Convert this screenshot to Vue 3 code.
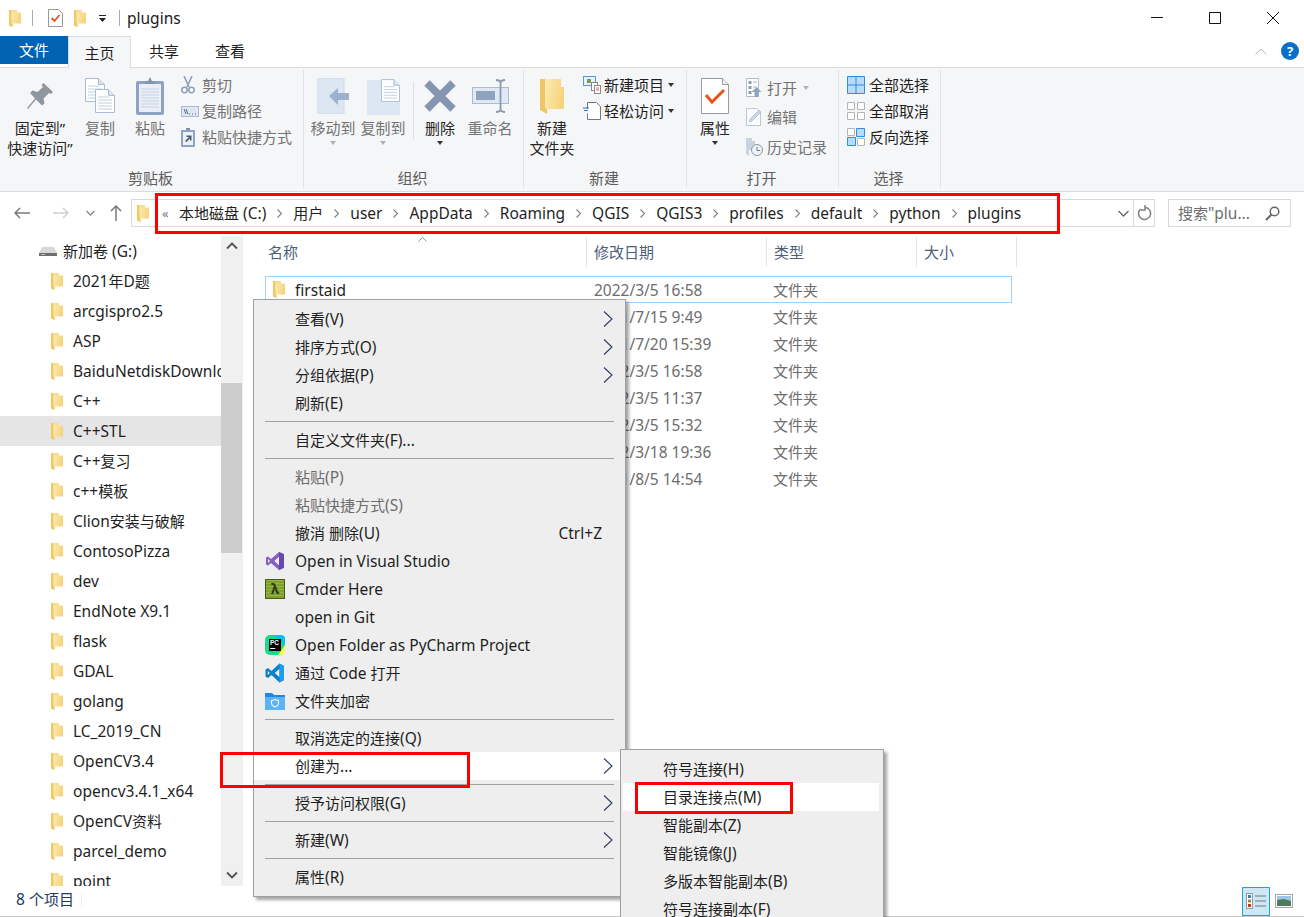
<script setup>
const sidebar = ['2021年D题','arcgispro2.5','ASP','BaiduNetdiskDownload','C++','C++STL','C++复习','c++模板','Clion安装与破解','ContosoPizza','dev','EndNote X9.1','flask','GDAL','golang','LC_2019_CN','OpenCV3.4','opencv3.4.1_x64','OpenCV资料','parcel_demo','point']
const crumbs = ['本地磁盘 (C:)','用户','user','AppData','Roaming','QGIS','QGIS3','profiles','default','python','plugins']
const files = [
  ['firstaid','2022/3/5 16:58'],['','2021/7/15 9:49'],['','2021/7/20 15:39'],['','2022/3/5 16:58'],
  ['','2022/3/5 11:37'],['','2022/3/5 15:32'],['','2022/3/18 19:36'],['','2021/8/5 14:54']
]
const menu = [
  {t:'查看(V)',arrow:1},{t:'排序方式(O)',arrow:1},{t:'分组依据(P)',arrow:1},{t:'刷新(E)'},{sep:1},
  {t:'自定义文件夹(F)...'},{sep:1},
  {t:'粘贴(P)',off:1},{t:'粘贴快捷方式(S)',off:1},{t:'撤消 删除(U)',key:'Ctrl+Z'},
  {t:'Open in Visual Studio',icon:'vs'},{t:'Cmder Here',icon:'cmder'},{t:'open in Git'},
  {t:'Open Folder as PyCharm Project',icon:'pc'},{t:'通过 Code 打开',icon:'code'},{t:'文件夹加密',icon:'lock'},{sep:1},
  {t:'取消选定的连接(Q)'},{t:'创建为...',arrow:1,hot:1},{sep:1},
  {t:'授予访问权限(G)',arrow:1},{sep:1},{t:'新建(W)',arrow:1},{sep:1},{t:'属性(R)'}
]
const sub = ['符号连接(H)','目录连接点(M)','智能副本(Z)','智能镜像(J)','多版本智能副本(B)','符号连接副本(F)']
const isLat = (s) => /^[\x00-\x7f]+$/.test(s)
const runs = (s) => s.match(/[\x00-\x7f]+|[^\x00-\x7f]+/g) || []
</script>

<template>
  <div class="win">
    <svg class="defs" width="0" height="0">
      <defs>
        <linearGradient id="fg" x1="0" x2="1" y1="0" y2="0.3">
          <stop offset="0" stop-color="#fdf2c0"/><stop offset="1" stop-color="#f6d47e"/>
        </linearGradient>
        <symbol id="folder" viewBox="0 0 12 17">
          <path d="M0 0h8v2.500h4V13.500H3.500V17L0 15.500z" fill="url(#fg)"/>
          <path d="M0 0h2.400v13.500H3.500V17L0 15.500z" fill="#f0c868"/>
          <path d="M2.400 0H8V2.500H2.400z" fill="#f8dd90"/>
        </symbol>
        <symbol id="doc" viewBox="0 0 20 24">
          <path d="M.5.5h13l6 6v17H.5z" fill="#fff" stroke="#a8bcd8"/>
          <path d="M13.5.5v6h6" fill="#dbe5f2" stroke="#a8bcd8"/>
          <path d="M3 8h11M3 11h14M3 14h14M3 17h14M3 20h14" stroke="#c3d0e2"/>
        </symbol>
      </defs>
    </svg>

    <header class="title">
      <svg class="i-folder-t"><use href="#folder"/></svg>
      <i class="bar b1"></i>
      <svg class="chk" width="15" height="18" viewBox="0 0 15 18">
        <path d="M.5.5h10l4 4v13H.5z" fill="#fff" stroke="#999"/>
        <path d="M3.5 9l3 3 5-6" fill="none" stroke="#e8531a" stroke-width="1.8"/>
      </svg>
      <svg class="i-folder-t f2"><use href="#folder"/></svg>
      <svg class="qa" width="7" height="7" viewBox="0 0 7 7"><path d="M0 0h7v1H0zM0 3h7L3.500 7z" fill="#222"/></svg>
      <i class="bar b2"></i>
      <span class="title-text lat">plugins</span>
      <div class="ctrls">
        <svg width="12" height="12" viewBox="0 0 12 12"><path d="M0 5.500h12" stroke="#111"/></svg>
        <svg width="12" height="12" viewBox="0 0 12 12"><path d="M.5.500h11v11H.5z" fill="none" stroke="#111"/></svg>
        <svg width="12" height="12" viewBox="0 0 12 12"><path d="M0 0l12 12M12 0L0 12" stroke="#111" stroke-width="1"/></svg>
      </div>
    </header>

    <nav class="tabs">
      <div class="tab file">文件</div>
      <div class="tab home">主页</div>
      <div class="tab">共享</div>
      <div class="tab">查看</div>
      <div class="tab-end">
        <svg width="12" height="7" viewBox="0 0 12 7"><path d="M.5 6.500L6 1l5.500 5.500" fill="none" stroke="#b5b5b5"/></svg>
        <span class="help">?</span>
      </div>
    </nav>

    <section class="ribbon">
      <div class="grp g1">
        <div class="grp-body">
          <div class="big w72">
            <div class="big-ic">
              <svg width="26" height="26" viewBox="0 0 26 26"><path d="M16.500 0L26 9l-2 2-2-1-5.500 5.500 1 5-2.500 2-6-6L1 26 0 25l8-9.500L3 10l2.500-2.500 5 1.500L16 4l-1.500-2z" fill="#8e979d"/></svg>
            </div>
            <span class="lb">固定到”<br>快速访问”</span>
          </div>
          <div class="big w48 off">
            <div class="big-ic">
              <svg width="30" height="36" viewBox="0 0 30 36"><use href="#doc" x="0" y="0" width="20" height="24"/><use href="#doc" x="10" y="10" width="20" height="26"/></svg>
            </div>
            <span class="lb">复制</span>
          </div>
          <div class="big w52 off">
            <div class="big-ic">
              <svg width="28" height="38" viewBox="0 0 28 38">
                <rect x="0" y="4" width="28" height="34" rx="2" fill="#8ea3c3"/>
                <rect x="3" y="7" width="22" height="28" fill="#eaeef6"/>
                <path d="M5 12h18M5 15h18M5 18h18M5 21h18M5 24h18M5 27h18M5 30h18" stroke="#c9d3e4"/>
                <path d="M9 7V4h3l2-4 2 4h3v3z" fill="#8495b2"/>
              </svg>
            </div>
            <span class="lb">粘贴</span>
          </div>
          <div class="col m4 off">
            <div class="sm">
              <span class="sm-ic">
                <svg width="14" height="18" viewBox="0 0 14 18"><path d="M3 0l5 11M11 0L6 11" stroke="#8ea0bb" stroke-width="1.600"/><circle cx="3.500" cy="14" r="2.700" fill="none" stroke="#8ea0bb" stroke-width="1.500"/><circle cx="10.500" cy="14" r="2.700" fill="none" stroke="#8ea0bb" stroke-width="1.500"/></svg>
              </span>剪切
            </div>
            <div class="sm">
              <span class="sm-ic">
                <svg width="18" height="11" viewBox="0 0 18 11"><rect x=".5" y=".5" width="17" height="10" fill="#dfe7f3" stroke="#a8b9d2"/><path d="M3 3l2 5M5 3l2 5M8 8h1M11 8h1M14 8h1" stroke="#5c6b82"/></svg>
              </span>复制路径
            </div>
            <div class="sm">
              <span class="sm-ic">
                <svg width="14" height="19" viewBox="0 0 14 19"><rect y="2" width="14" height="17" rx="1" fill="#8ea3c3"/><rect x="2" y="4" width="10" height="13" fill="#edf1f7"/><path d="M5 2V0h4v2z" fill="#7e8fac"/><path d="M4 13l4-4H5.500V7.500H10.500V12.500H9V10.500l-3.500 3.500z" fill="#4d5c75"/></svg>
              </span>粘贴快捷方式
            </div>
          </div>
        </div>
        <div class="grp-lb">剪贴板</div>
      </div>

      <div class="grp g2">
        <div class="grp-body">
          <div class="big w50 off">
            <div class="big-ic">
              <svg width="32" height="36" viewBox="0 0 32 36"><rect width="27" height="36" fill="#dde6f3" stroke="#cfdaea"/><path d="M12 18l9-8v5h11v7H21v5z" fill="#9db0cd"/></svg>
            </div>
            <span class="lb">移动到</span>
            <i class="tri grey"></i>
          </div>
          <div class="big w50 off">
            <div class="big-ic">
              <svg width="33" height="38" viewBox="0 0 33 38"><path d="M0 3h17v8h16v27H0z" fill="#dde6f3"/><use href="#doc" x="14" y="0" width="19" height="27"/></svg>
            </div>
            <span class="lb">复制到</span>
            <i class="tri grey"></i>
          </div>
          <i class="vline"></i>
          <div class="big w40">
            <div class="big-ic">
              <svg width="32" height="32" viewBox="0 0 32 32"><path d="M3 3l26 26M29 3L3 29" stroke="#8494b1" stroke-width="7.500"/></svg>
            </div>
            <span class="lb">删除</span>
            <i class="tri"></i>
          </div>
          <div class="big w60 off">
            <div class="big-ic">
              <svg width="37" height="34" viewBox="0 0 37 34"><rect x=".5" y="8.500" width="36" height="16" fill="#dfe8f4" stroke="#a9bbd5"/><rect x="4" y="12" width="19" height="9" fill="#8fa2c0"/><path d="M24 1c3 0 4 1 4.500 2C29 2 30 1 33 1M24 33c3 0 4-1 4.500-2 .5 1 1.500 2 4.500 2M28.500 3v28" fill="none" stroke="#8c99ad" stroke-width="1.800"/></svg>
            </div>
            <span class="lb">重命名</span>
          </div>
        </div>
        <div class="grp-lb">组织</div>
      </div>

      <div class="grp g3">
        <div class="grp-body">
          <div class="big w48">
            <div class="big-ic">
              <svg width="24" height="36" viewBox="0 0 24 36">
                <path d="M0 1h21v8h3v22H7v5L0 32z" fill="url(#fg)"/>
                <path d="M0 1h5v30h2v5l-7-4z" fill="#efc566"/>
              </svg>
            </div>
            <span class="lb">新建<br>文件夹</span>
          </div>
          <div class="col m6">
            <div class="sm">
              <span class="sm-ic">
                <svg width="18" height="18" viewBox="0 0 18 18"><rect x=".5" y=".5" width="12" height="9" fill="#e7f1fb" stroke="#5a9ac9"/><rect x="4" y="3" width="4" height="4" fill="#7f9a4e"/><rect x="8.500" y="6.500" width="6" height="8" fill="#fff" stroke="#888"/><rect x="11.500" y="9.500" width="6" height="8" fill="#fff" stroke="#888"/><path d="M13 12h3M13 14h3" stroke="#c66"/></svg>
              </span>新建项目<i class="tri inl"></i>
            </div>
            <div class="sm">
              <span class="sm-ic">
                <svg width="18" height="18" viewBox="0 0 18 18"><path d="M4.500.5h9l4 4v13h-13v-6M4.500 7V.5" fill="#fff" stroke="#777"/><path d="M0 6h6M1 8.500h4" stroke="#2b79c2" stroke-width="1.200"/></svg>
              </span>轻松访问<i class="tri inl"></i>
            </div>
          </div>
        </div>
        <div class="grp-lb">新建</div>
      </div>

      <div class="grp g4">
        <div class="grp-body">
          <div class="big w48">
            <div class="big-ic">
              <svg width="28" height="36" viewBox="0 0 28 36"><path d="M.5.5h21l6 6v29H.5z" fill="#fff" stroke="#9a9a9a"/><path d="M21.500.5v6h6" fill="#eee" stroke="#9a9a9a"/><path d="M5 17l6 7L23 12" fill="none" stroke="#e9541c" stroke-width="3"/></svg>
            </div>
            <span class="lb">属性</span>
            <i class="tri"></i>
          </div>
          <div class="col m6 tall off">
            <div class="sm">
              <span class="sm-ic">
                <svg width="16" height="19" viewBox="0 0 16 19"><path d="M.5.500h12v18H.5z" fill="#fff" stroke="#b2bdcb"/><path d="M2.500 3h3v3h-3zM2.500 8h3v3h-3zM2.500 13h3v3h-3z" fill="#8d9bb0"/><path d="M7 4h4M7 9h4" stroke="#aab6c8"/><path d="M10.500 9l5 5h-3v5h-4v-5h-3z" fill="#8ea3bf"/></svg>
              </span>打开<i class="tri inl grey"></i>
            </div>
            <div class="sm">
              <span class="sm-ic">
                <svg width="16" height="18" viewBox="0 0 16 18"><path d="M.5.500h10l4 4v13H.5z" fill="#fbfcfe" stroke="#bcc8d8"/><path d="M3 14l1-3L13 2l2 2-9 9z" fill="#c9d6e6" stroke="#9fb0c6" stroke-width=".6"/></svg>
              </span>编辑
            </div>
            <div class="sm">
              <span class="sm-ic">
                <svg width="17" height="19" viewBox="0 0 17 19"><path d="M0 1h6v3h3v9H3v6l-3-2z" fill="#c9d3e0"/><circle cx="11" cy="13" r="5.500" fill="#eef2f6" stroke="#8d98a6"/><path d="M11 10v3.500h3" fill="none" stroke="#6f7a88"/></svg>
              </span>历史记录
            </div>
          </div>
        </div>
        <div class="grp-lb">打开</div>
      </div>

      <div class="grp g5">
        <div class="grp-body">
          <div class="col m4">
            <div class="sm">
              <span class="sm-ic">
                <svg width="18" height="18" viewBox="0 0 18 18"><path d="M.5.500h17v17H.5zM9 .5v17M.5 9h17" fill="#b8dcf8" stroke="#2f8fdc"/></svg>
              </span>全部选择
            </div>
            <div class="sm">
              <span class="sm-ic">
                <svg width="18" height="18" viewBox="0 0 18 18"><path d="M.5.500h7v7h-7zM10.500.5h7v7h-7zM.5 10.500h7v7h-7zM10.500 10.500h7v7h-7z" fill="#fff" stroke="#b5b5b5"/></svg>
              </span>全部取消
            </div>
            <div class="sm">
              <span class="sm-ic">
                <svg width="18" height="18" viewBox="0 0 18 18"><path d="M.5.500h7v7h-7zM10.500 10.500h7v7h-7z" fill="#fff" stroke="#b5b5b5"/><path d="M9.500.5h8v8h-8zM.5 9.500h8v8h-8z" fill="#b8dcf8" stroke="#2f8fdc"/></svg>
              </span>反向选择
            </div>
          </div>
        </div>
        <div class="grp-lb">选择</div>
      </div>
    </section>

    <div class="addr-row">
      <svg class="nav n1" width="16" height="12" viewBox="0 0 16 12"><path d="M16 6H1M6 1L1 6l5 5" fill="none" stroke="#7a7a7a" stroke-width="1.500"/></svg>
      <svg class="nav n2" width="16" height="12" viewBox="0 0 16 12"><path d="M0 6h15M10 1l5 5-5 5" fill="none" stroke="#d0d0d0" stroke-width="1.500"/></svg>
      <svg class="nav n3" width="9" height="6" viewBox="0 0 9 6"><path d="M.5 1l4 4 4-4" fill="none" stroke="#8a8a8a" stroke-width="1.300"/></svg>
      <svg class="nav n4" width="12" height="16" viewBox="0 0 12 16"><path d="M6 16V1M1 6l5-5 5 5" fill="none" stroke="#7a7a7a" stroke-width="1.500"/></svg>
      <div class="addr">
        <svg class="addr-f"><use href="#folder"/></svg>
        <span class="dbl">«</span>
        <div class="crumbs">
          <template v-for="(c,i) in crumbs" :key="c">
            <svg v-if="i" class="sep" width="5" height="9" viewBox="0 0 5 9"><path d="M.5.500l4 4-4 4" fill="none" stroke="#808080" stroke-width="1.100"/></svg>
            <span><span v-for="(r,j) in runs(c)" :key="j" :class="{lat:isLat(r)}">{{ r }}</span></span>
          </template>
        </div>
        <svg class="dd" width="11" height="7" viewBox="0 0 11 7"><path d="M.5 1l5 5 5-5" fill="none" stroke="#666" stroke-width="1.300"/></svg>
        <i class="addr-v"></i>
        <svg class="ref" width="15" height="16" viewBox="0 0 15 16"><path d="M8.500 2.500a6 6 0 1 1-5 1.500M8 0v5H3.500" fill="none" stroke="#808080" stroke-width="1.500"/></svg>
      </div>
      <div class="search">
        <span>搜索<span class="lat">"plu...</span></span>
        <svg width="15" height="15" viewBox="0 0 15 15"><circle cx="9.500" cy="5.500" r="4.300" fill="none" stroke="#666" stroke-width="1.500"/><path d="M6.500 8.500L1 14" stroke="#666" stroke-width="2"/></svg>
      </div>
    </div>

    <main class="main">
      <aside class="side">
        <div class="tree">
          <div class="row vol">
            <svg width="18" height="11" viewBox="0 0 18 11"><path d="M3 1h12l3 6v3H0V7z" fill="#d8d8d8"/><path d="M0 7h18v3H0z" fill="#6f6f6f"/><path d="M2 8.500h4" stroke="#bbb"/></svg>
            <span>新加卷<span class="lat"> (G:)</span></span>
          </div>
          <div v-for="s in sidebar" :key="s" class="row" :class="{on: s==='C++STL'}">
            <svg class="fi"><use href="#folder"/></svg>
            <span><span v-for="(r,j) in runs(s)" :key="j" :class="{lat:isLat(r)}">{{ r }}</span></span>
          </div>
        </div>
        <div class="scroll">
          <svg width="12" height="8" viewBox="0 0 12 8"><path d="M1 6.500l5-5 5 5" fill="none" stroke="#505050" stroke-width="1.800"/></svg>
          <i class="thumb"></i>
          <svg class="dn" width="12" height="8" viewBox="0 0 12 8"><path d="M1 1.500l5 5 5-5" fill="none" stroke="#505050" stroke-width="1.800"/></svg>
        </div>
      </aside>
      <div class="list">
        <div class="heads">
          <div>名称<svg class="sort" width="9" height="5" viewBox="0 0 9 5"><path d="M.5 4.500l4-4 4 4" fill="none" stroke="#9a9a9a"/></svg></div>
          <div>修改日期</div>
          <div>类型</div>
          <div>大小</div>
        </div>
        <div v-for="(f,i) in files" :key="i" class="file-row" :class="{first:i===0}">
          <div class="fname"><svg v-if="f[0]" class="fi2"><use href="#folder"/></svg><span class="lat">{{ f[0] }}</span></div>
          <div class="muted lat">{{ f[1] }}</div>
          <div class="muted">文件夹</div>
        </div>
      </div>
    </main>

    <footer class="status">
      <span class="count"><span class="lat">8 </span>个项目</span>
      <i class="st-v"></i>
      <div class="views">
        <div class="v-on">
          <svg width="20" height="16" viewBox="0 0 20 16"><rect x=".5" y=".5" width="6" height="15" fill="#fff" stroke="#999"/><path d="M2 2h3v3H2z" fill="#3b7fa8"/><path d="M2 6.500h3v3H2z" fill="#a78a3a"/><path d="M2 11h3v3H2z" fill="#c4391d"/><path d="M9 3h11M9 8h11M9 13h11" stroke="#777"/></svg>
        </div>
        <svg width="18" height="14" viewBox="0 0 18 14"><rect x=".5" y=".5" width="17" height="13" fill="#fff" stroke="#a5a5a5"/><path d="M2 2h14v5H2z" fill="#9bc6e6"/><path d="M2 6l7-1 7 2v5H2z" fill="#4f7a5c"/></svg>
      </div>
    </footer>

    <div class="menu">
      <template v-for="(m,i) in menu" :key="i">
        <div v-if="m.sep" class="m-sep"></div>
        <div v-else class="m-item" :class="{off:m.off,hot:m.hot}">
          <span class="m-ic">
            <svg v-if="m.icon==='vs'" width="20" height="20" viewBox="0 0 20 20"><path fill-rule="evenodd" d="M14 1l5 2.200v13.600L14 19 6 12l-3 2.500-2-1V6.500l2-1L6 8zM14 6l-4.500 4 4.500 4zM3 8v4l2-2z" fill="#8661c5"/><path d="M14 1l5 2.200v13.600L14 19z" fill="#6b45b0"/><path d="M14 6l-4.500 4 4.500 4z" fill="#eee"/></svg>
            <span v-else-if="m.icon==='cmder'" class="cm">λ</span>
            <svg v-else-if="m.icon==='pc'" width="20" height="20" viewBox="0 0 20 20"><rect width="20" height="20" rx="5" fill="#21d789"/><path d="M8 0h8a4 4 0 0 1 4 4v6z" fill="#07c3f2"/><path d="M13 20h3a4 4 0 0 0 4-4v-6z" fill="#fcf84a"/><rect x="4" y="4" width="12" height="12" fill="#000"/><text x="5" y="10" class="pc-t">PC</text><path d="M5.200 13.500h5" stroke="#fff"/></svg>
            <svg v-else-if="m.icon==='code'" width="20" height="20" viewBox="0 0 20 20"><path fill-rule="evenodd" d="M14.500 0.500L19 3v14l-4.500 2.500L6.500 12 3 15l-2.500-1.500v-7L3 5l3.500 3zM14.500 5.800L9.800 10l4.700 4.200zM2.800 8v4l2-2z" fill="#0a7fd0"/><path d="M14.500 .5L19 3v14l-4.500 2.500z" fill="#1f9cf0"/></svg>
            <svg v-else-if="m.icon==='lock'" width="20" height="20" viewBox="0 0 20 20"><path d="M0 2h7l2 2h11v14a1 1 0 0 1-1 1H1a1 1 0 0 1-1-1z" fill="#1e88e5"/><path d="M0 6h20v12a1 1 0 0 1-1 1H1a1 1 0 0 1-1-1z" fill="#5cb3f5"/><path d="M10 8.500l3.500 1.200v2.600c0 1.800-1.400 2.900-3.500 3.700-2.100-.8-3.500-1.900-3.500-3.700V9.700z" fill="none" stroke="#e8f4fe" stroke-width="1.100"/></svg>
          </span>
          <span class="m-t"><span v-for="(r,j) in runs(m.t)" :key="j" :class="{lat:isLat(r)}">{{ r }}</span></span>
          <span v-if="m.key" class="m-key lat">{{ m.key }}</span>
          <svg v-if="m.arrow" class="m-arr" width="10" height="16" viewBox="0 0 10 16"><path d="M1 .5l8 7.500-8 7.500" fill="none" stroke="#2c3a5e" stroke-width="1.100"/></svg>
        </div>
      </template>
    </div>

    <div class="submenu">
      <div v-for="(s,i) in sub" :key="s" class="s-item" :class="{hot:i===1}"><span v-for="(r,j) in runs(s)" :key="j" :class="{lat:isLat(r)}">{{ r }}</span></div>
    </div>

    <i class="mark mk1"></i>
    <i class="mark mk2"></i>
    <i class="mark mk3"></i>
  </div>
</template>

<style>
html, body { margin: 0; padding: 0; background: #fff; overflow: hidden; }
</style>

<style scoped>
.win {
  position: relative; width: 1304px; height: 917px; overflow: hidden; background: #fff;
  display: flex; flex-direction: column; color: #1f1f1f;
  font-family: "Noto Sans", "Noto Sans CJK SC", sans-serif; font-size: 15px; line-height: 20px;
}
.lat { font-size: 15.5px; }
.defs { position: absolute; }
i { display: block; font-style: normal; }

.title { height: 36px; flex: none; display: flex; align-items: center; }
.i-folder-t { width: 12px; height: 17px; margin-left: 9px; }
.bar { width: 1px; height: 16px; background: #a9a9a9; }
.b1 { margin-left: 11px; }
.chk { margin-left: 15px; }
.f2 { margin-left: 11px; }
.qa { margin-left: 13px; }
.b2 { margin-left: 13px; }
.title-text { margin-left: 7px; color: #1a1a1a; }
.ctrls { margin-left: auto; margin-right: 25px; display: flex; gap: 46px; }

.tabs { height: 32px; flex: none; display: flex; position: relative; z-index: 1; }
.tab { width: 66px; display: flex; align-items: center; justify-content: center; padding-bottom: 2px; }
.tab.file { width: 68px; height: 28px; background: #0063b1; color: #fff; padding: 0; }
.tab.home { width: 63px; height: 32px; box-sizing: border-box; background: #f5f6f7; border: 1px solid #dadbdc; border-bottom: 0; padding-bottom: 0; margin-left: 0; }
.tab-end { margin-left: auto; margin-right: 5px; display: flex; align-items: center; gap: 14px; padding-bottom: 2px; }
.help { width: 18px; height: 18px; border-radius: 50%; background: #0a6fc9; color: #fff; font-size: 13px; font-weight: 700; line-height: 18px; text-align: center; }

.ribbon { height: 125px; flex: none; box-sizing: border-box; display: flex; background: #f5f6f7; border-top: 1px solid #dadbdc; border-bottom: 1px solid #dadbdc; margin-top: -1px; }
.grp { box-sizing: border-box; flex: none; display: flex; flex-direction: column; position: relative; }
.grp::after { content: ""; position: absolute; right: 0; top: 2px; bottom: 3px; width: 1px; background: #e1e3e6; }
.g1 { width: 304px; }
.g2 { width: 220px; }
.g3 { width: 163px; }
.g4 { width: 152px; }
.g5 { width: 102px; }
.g5 .sm-ic { padding-left: 0; }
.grp-body { flex: 1; display: flex; padding: 6px 0 0 4px; min-height: 0; }
.grp-lb { height: 24px; margin-bottom: 1px; padding-right: 3px; text-align: center; color: #5c5c5c; font-size: 15px; line-height: 24px; }
.big { display: flex; flex-direction: column; align-items: center; flex: none; position: relative; color: #262626; }
.big.off, .col.off { color: #737373; }
.big-ic { height: 44px; display: flex; align-items: center; justify-content: center; }
.lb { text-align: center; white-space: nowrap; line-height: 20px; }
.w72 { width: 72px; } .w48 { width: 48px; } .w52 { width: 52px; } .w50 { width: 50px; } .w40 { width: 40px; } .w60 { width: 60px; }
.vline { width: 1px; height: 57px; background: #dcdee1; margin: 8px 6px 0 5px; flex: none; }
.tri { width: 0; height: 0; border: 3.500px solid transparent; border-top: 4px solid #333; border-bottom: 0; margin-top: 3px; }
.tri.grey { border-top-color: #b0b0b0; }
.tri.inl { margin: 0 0 0 4px; }
.col { flex: none; margin-top: -2px; }
.m4 { margin-left: 4px; }
.m6 { margin-left: 6px; }
.sm { height: 26px; display: flex; align-items: center; white-space: nowrap; }
.sm-ic { width: 22px; flex: none; display: flex; align-items: center; padding-left: 1px; box-sizing: border-box; }
.tall { margin-top: -1px; }
.tall .sm { height: 29.500px; }
.tall .tri.inl { margin-left: 6px; }

.addr-row { height: 38px; flex: none; display: flex; padding-top: 7px; box-sizing: border-box; align-items: flex-start; }
.nav { flex: none; margin-top: 8px; }
.n1 { margin-left: 14px; }
.n2 { margin-left: 23px; }
.n3 { margin-left: 17px; margin-top: 11px; }
.n4 { margin-left: 15px; margin-top: 6px; }
.addr { width: 1024px; height: 28px; box-sizing: border-box; margin-left: 9px; border: 1px solid #d9d9d9; display: flex; align-items: center; flex: none; }
.addr-f { width: 12px; height: 17px; margin-left: 5px; flex: none; }
.dbl { margin-left: 13px; color: #777; font-size: 13px; width: 17px; flex: none; }
.crumbs { display: flex; align-items: center; gap: 11px; flex: 1; white-space: nowrap; overflow: hidden; }
.dd { margin-right: 4px; flex: none; }
.addr-v { width: 1px; height: 26px; background: #d9d9d9; flex: none; }
.ref { margin: 0 2px 0 3px; flex: none; }
.search { width: 123px; height: 28px; box-sizing: border-box; margin-left: 13px; border: 1px solid #d9d9d9; display: flex; align-items: center; justify-content: space-between; padding: 0 10px 0 9px; color: #6d6d6d; flex: none; }

.main { flex: 1; min-height: 0; display: flex; overflow: hidden; }
.side { width: 243px; flex: none; display: flex; position: relative; border-right: 1px solid #f0f0f0; box-sizing: border-box; }
.tree { width: 221px; flex: none; padding-top: 6px; overflow: hidden; box-sizing: border-box; }
.row { height: 30px; display: flex; align-items: center; padding-left: 51px; white-space: nowrap; color: #1f1f1f; }
.row.on { background: #e5e5e5; }
.row.vol { padding-left: 39px; }
.row.vol span { margin-left: 6px; }
.row.vol span span { margin-left: 0; }
.fi { width: 12px; height: 17px; margin-right: 10px; flex: none; }
.scroll { width: 21px; flex: none; background: #f0f0f0; margin-top: 6px; display: flex; flex-direction: column; align-items: center; position: relative; padding-top: 6px; box-sizing: border-box; }
.thumb { position: absolute; left: 0; right: 0; top: 147px; height: 170px; background: #cdcdcd; }
.dn { margin-top: auto; margin-bottom: 7px; }

.list { flex: 1; min-width: 0; padding: 7px 0 0 18px; }
.heads { display: grid; grid-template-columns: 326px 180px 150px 100px; height: 30px; width: 756px; margin-bottom: 9px; color: #4c607a; position: relative; }
.heads > div { border-right: 1px solid #e5e5e5; padding-left: 7px; line-height: 30px; }
.sort { position: absolute; left: 157px; top: 0; }
.file-row { display: grid; grid-template-columns: 328px 179px 150px; width: 747px; height: 27px; box-sizing: border-box; margin-left: 4px; align-items: center; border: 1px solid transparent; }
.file-row.first { border-color: #99d1ff; }
.fname { display: flex; align-items: center; padding-left: 7px; }
.fi2 { width: 12px; height: 17px; margin-right: 10px; flex: none; }
.muted { color: #6d6d6d; }

.status { height: 31px; flex: none; box-sizing: border-box; border-bottom: 1px solid #c8c8c8; display: flex; align-items: center; position: relative; }
.count { margin-left: 16px; color: #1e395b; padding-bottom: 4px; }
.st-v { width: 1px; height: 14px; background: #f0f0f0; margin-left: 7px; margin-bottom: 2px; }
.views { margin-left: auto; margin-right: 11px; display: flex; align-items: center; gap: 5px; }
.v-on { width: 28px; height: 29px; box-sizing: border-box; background: #cce8f7; border: 1px solid #26a0da; display: flex; align-items: center; justify-content: center; }

.menu { position: absolute; left: 253px; top: 299px; width: 373px; box-sizing: border-box; background: #eeeeee; border: 1px solid #a0a0a0; padding: 5px 0; box-shadow: 3px 3px 3px rgba(0,0,0,.35); color: #1f1f1f; }
.m-item { height: 28px; display: flex; align-items: center; position: relative; white-space: nowrap; }
.m-item.off { color: #6d6d6d; }
.m-item.hot { background: #fff; }
.m-ic { width: 20px; height: 20px; flex: none; margin: 0 10px 0 11px; display: flex; }
.m-key { position: absolute; right: 23px; }
.m-arr { position: absolute; left: 349px; top: 6px; }
.m-sep { height: 9px; position: relative; }
.m-sep::after { content: ""; position: absolute; left: 11px; right: 11px; top: 4px; height: 1px; background: #a0a0a0; }
.cm { width: 20px; height: 20px; box-sizing: border-box; background: repeating-linear-gradient(0deg, #7fa02e 0 2px, #94b340 2px 3px); border: 1px solid #47591a; color: #2d3a10; font-size: 14px; line-height: 17px; text-align: center; font-weight: 700; }
.pc-t { font-size: 6.500px; font-weight: 700; fill: #fff; font-family: "Liberation Sans", sans-serif; }

.submenu { position: absolute; left: 620px; top: 749px; width: 264px; box-sizing: border-box; background: #eeeeee; border: 1px solid #a0a0a0; padding: 5px 2px; box-shadow: 3px 3px 3px rgba(0,0,0,.35); }
.s-item { height: 28px; line-height: 28px; padding-left: 40px; white-space: nowrap; margin-right: 2px; }
.s-item.hot { background: #fff; }

.mark { position: absolute; box-sizing: border-box; border: 3px solid #f00; pointer-events: none; }
.mk1 { left: 155px; top: 193px; width: 905px; height: 41px; }
.mk2 { left: 220px; top: 752px; width: 250px; height: 36px; }
.mk3 { left: 635px; top: 782px; width: 158px; height: 32px; }
</style>
